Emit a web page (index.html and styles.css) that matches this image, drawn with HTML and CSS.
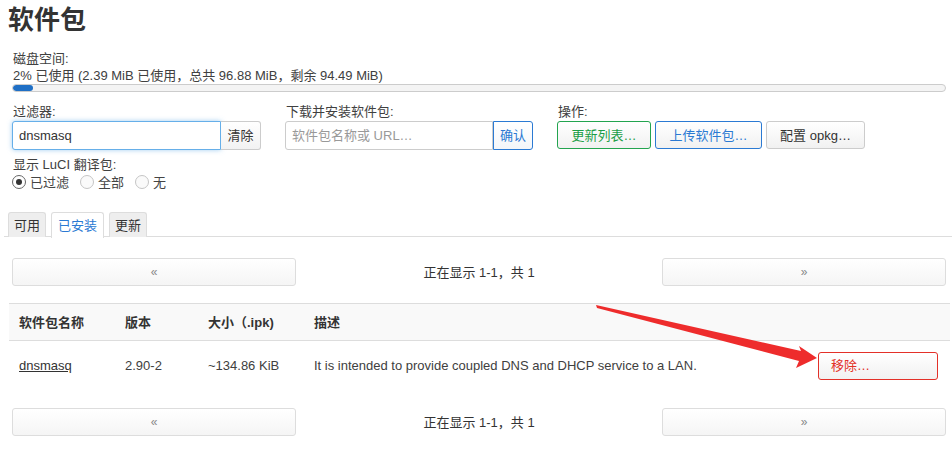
FILE: index.html
```html
<!DOCTYPE html>
<html lang="zh-CN">
<head>
<meta charset="utf-8">
<title>软件包</title>
<link rel="stylesheet" href="styles.css">
</head>
<body>
<div class="page">
  <h2 class="title">软件包</h2>

  <div class="disk">
    <div class="lbl">磁盘空间:</div>
    <div class="val">2% 已使用 (2.39 MiB 已使用，总共 96.88 MiB，剩余 94.49 MiB)</div>
    <div class="bar"><div class="fill" style="width:2%"></div></div>
  </div>

  <div class="controls">
    <div class="group g-filter">
      <div class="lbl">过滤器:</div>
      <div class="igroup">
        <input class="inp focus" type="text" value="dnsmasq">
        <span class="addon btn-grey">清除</span>
      </div>
    </div>
    <div class="group g-dl">
      <div class="lbl">下载并安装软件包:</div>
      <div class="igroup">
        <input class="inp" type="text" placeholder="软件包名称或 URL…">
        <span class="addon btn-blue">确认</span>
      </div>
    </div>
    <div class="group g-act">
      <div class="lbl">操作:</div>
      <div class="btns">
        <span class="btn btn-green b1">更新列表…</span>
        <span class="btn btn-blue b2">上传软件包…</span>
        <span class="btn btn-grey b3">配置 opkg…</span>
      </div>
    </div>
  </div>

  <div class="trans">
    <div class="lbl">显示 LuCI 翻译包:</div>
    <div class="radios">
      <label class="radio"><span class="rb on"></span>已过滤</label>
      <label class="radio"><span class="rb"></span>全部</label>
      <label class="radio"><span class="rb"></span>无</label>
    </div>
  </div>

  <div class="tabs">
    <span class="tab">可用</span>
    <span class="tab active">已安装</span>
    <span class="tab">更新</span>
  </div>

  <div class="pager top">
    <span class="pbtn">«</span>
    <span class="ptext">正在显示 1-1，共 1</span>
    <span class="pbtn">»</span>
  </div>

  <div class="tablewrap">
    <div class="trow thead">
      <div class="c c1">软件包名称</div>
      <div class="c c2">版本</div>
      <div class="c c3">大小（.ipk)</div>
      <div class="c c4">描述</div>
      <div class="c c5"></div>
    </div>
    <div class="trow tbody">
      <div class="c c1"><span class="link">dnsmasq</span></div>
      <div class="c c2">2.90-2</div>
      <div class="c c3">~134.86 KiB</div>
      <div class="c c4">It is intended to provide coupled DNS and DHCP service to a LAN.</div>
      <div class="c c5"><span class="btn btn-red rm">移除…</span></div>
    </div>
  </div>

  <div class="pager bottom">
    <span class="pbtn">«</span>
    <span class="ptext">正在显示 1-1，共 1</span>
    <span class="pbtn">»</span>
  </div>

  <svg class="arrow" width="952" height="451" viewBox="0 0 952 451">
    <polygon points="596,305 801,351 799,346 817,358 796,368 799,361 597,308" fill="#ee2c2c"/>
  </svg>
</div>
</body>
</html>
```

FILE: styles.css
```css
* { box-sizing: border-box; }
html, body { margin: 0; padding: 0; background: #fff; }
body {
  font-family: "Liberation Sans", Arial, "Noto Sans CJK SC", sans-serif;
  font-size: 13px;
  color: #404040;
  line-height: 17px;
}
.page { position: relative; width: 952px; height: 451px; overflow: hidden; }
.title {
  margin: 0;
  padding: 4px 0 0 8px;
  height: 40px;
  font-size: 26px;
  line-height: 32px;
  font-weight: bold;
  color: #333;
}
.disk { padding: 10px 6px 0 12px; }
.lbl { padding-left: 1px; height: 17px; line-height: 17px; }
.val { padding-left: 1px; height: 17px; }
.bar {
  height: 8px;
  border: 1px solid #ccc;
  border-radius: 4px;
  background: #f4f4f4;
  overflow: hidden;
}
.fill { height: 100%; background: #1f6fc5; border-radius: 3px; min-width: 20px; }

.controls { display: flex; padding: 11px 0 0 12px; }
.group .lbl { margin-bottom: 1px; }
.g-filter { width: 273px; }
.g-dl { width: 272px; }
.igroup { display: flex; height: 29px; }
.inp {
  height: 29px;
  border: 1px solid #ccc;
  border-radius: 3px 0 0 3px;
  padding: 0 6px;
  font: inherit;
  color: #333;
  outline: none;
}
.g-filter .inp { width: 209px; }
.g-dl .inp { width: 208px; }
.inp::placeholder { color: #999; }
.inp.focus { border-color: #66afe9; box-shadow: 0 0 5px rgba(102,175,233,.6); }
.addon {
  display: flex; align-items: center; justify-content: center;
  height: 29px; width: 40px;
  border: 1px solid #ccc; border-left: none;
  border-radius: 0 3px 3px 0;
  background: linear-gradient(#fff, #f2f2f2);
  color: #333;
}
.addon.btn-blue { border: 1px solid #2b7ad3; color: #2b7ad3; background: linear-gradient(#fff,#f4f6f9); }

.btns { display: flex; gap: 4px; }
.btn {
  display: inline-flex; align-items: center; justify-content: center;
  height: 28px;
  border: 1px solid #ccc;
  border-radius: 3px;
  background: linear-gradient(#fff, #f1f1f1);
  color: #333;
}
.btn-green { border-color: #23a44f; color: #1c9e46; }
.btn-blue { border-color: #2b7ad3; color: #2b7ad3; }
.btn-grey { border-color: #ccc; color: #333; }
.btn-red { border-color: #e33028; color: #e33028; }
.b1 { width: 94px; }
.b2 { width: 107px; }
.b3 { width: 99px; }

.trans { padding: 6px 0 0 12px; }
.radios { display: flex; height: 18px; align-items: center; }
.radio { display: inline-flex; align-items: center; margin-right: 11px; color: #444; }
.rb {
  width: 14px; height: 14px; border-radius: 50%;
  border: 1px solid #c5c5c5; background: #fafafa;
  margin-right: 4px; position: relative;
}
.rb.on { border-color: #666; background: #fff; }
.rb.on::after {
  content: ""; position: absolute; left: 3px; top: 3px;
  width: 6px; height: 6px; border-radius: 50%; background: #333;
}

.tabs {
  display: flex; gap: 5px;
  margin: 21px 0 0 4px;
  padding-left: 4px;
  border-bottom: 1px solid #ddd;
  height: 25px;
}
.tab {
  display: flex; align-items: center; justify-content: center;
  height: 25px; padding: 0 5px;
  border: 1px solid #ddd; border-bottom: none;
  border-radius: 3px 3px 0 0;
  background: #eee;
  color: #333;
}
.tab.active { background: #fff; color: #2b7ad3; height: 26px; padding: 0 6px; }

.pager { display: flex; align-items: center; justify-content: space-between; padding: 0 6px 0 12px; }
.pager.top { margin-top: 21px; }
.pager.bottom { margin-top: 18px; }
.pbtn {
  display: flex; align-items: center; justify-content: center;
  width: 284px; height: 28px;
  border: 1px solid #ddd; border-radius: 3px;
  background: linear-gradient(#fff, #f5f5f5);
  color: #888; font-size: 12px;
}
.ptext { color: #333; }

.tablewrap { margin: 17px 2px 0 9px; }
.trow { display: flex; align-items: center; }
.thead { height: 38px; background: #f9f9f9; border-top: 1px solid #ddd; border-bottom: 1px solid #ddd; font-weight: bold; color: #333; }
.tbody { height: 49px; }
.c { padding-left: 10px; white-space: nowrap; }
.c1 { width: 106px; }
.c2 { width: 83px; }
.c3 { width: 106px; }
.c4 { width: 504px; }
.c5 { flex: 1; }
.link { text-decoration: underline; color: #333; }
.rm { width: 120px; height: 28px; justify-content: flex-start; padding-left: 12px; }

.arrow { position: absolute; left: 0; top: 0; pointer-events: none; }
```
